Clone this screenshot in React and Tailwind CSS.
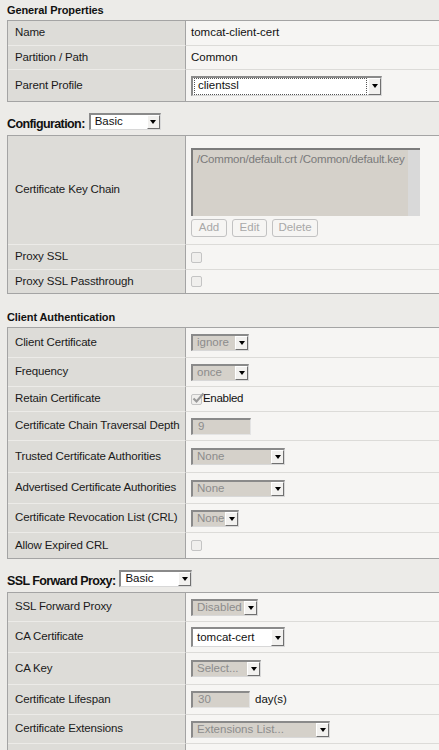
import React from 'react';

const FONT = { fontFamily: '"Liberation Sans", Arial, sans-serif' };

// little old-style select box
const Sel = ({ w, value, disabled, white, h = 17, focus }) => (
  <div
    className={`inline-flex items-stretch border-t-2 border-l-2 border-t-[#8a8a8a] border-l-[#8a8a8a] border-b border-r border-b-[#d8d8d8] border-r-[#d8d8d8] ${
      disabled ? 'bg-[#d5d1ca] text-[#8c8c8c]' : 'bg-white text-[#111]'
    }`}
    style={{ width: w, height: h }}
  >
    <div className="flex-1 flex items-center min-w-0 px-[1px]">
      <span
        className={`flex items-center h-full w-full pl-[3px] leading-none text-[11.5px] ${
          focus ? 'border border-dotted border-[#555]' : ''
        }`}
      >
        {value}
      </span>
    </div>
    <div className="w-[13px] flex items-center justify-center bg-[#f2f1ef] border-l border-t border-l-white border-t-white border-r border-b border-r-[#707070] border-b-[#707070]">
      <div className="w-0 h-0 border-l-[3px] border-r-[3px] border-t-[4px] border-l-transparent border-r-transparent border-t-black" />
    </div>
  </div>
);

const Input = ({ w, value }) => (
  <div
    className="inline-flex items-center h-[17px] bg-[#d5d1ca] text-[#8c8c8c] border-t-2 border-l-2 border-t-[#8a8a8a] border-l-[#8a8a8a] border-b border-r border-b-[#e4e4e4] border-r-[#e4e4e4] pl-[5px] text-[11.5px] leading-none"
    style={{ width: w }}
  >
    {value}
  </div>
);

const Check = ({ checked }) => (
  <div className="relative w-[11px] h-[11px] rounded-[2px] border border-[#c4c4c4] bg-[#f0efed]">
    {checked && (
      <svg className="absolute -top-[3px] left-0" width="13" height="12" viewBox="0 0 13 12">
        <path d="M1.5 6.5 L4.5 9.5 L11.5 1.5" fill="none" stroke="#9a9a9a" strokeWidth="2.2" />
      </svg>
    )}
  </div>
);

const Btn = ({ children, w }) => (
  <div
    className="h-[18px] flex items-center justify-center rounded-[3px] border border-[#c2c2c2] bg-[#f6f5f3] text-[#a8a8a8] text-[11.5px]"
    style={{ width: w }}
  >
    {children}
  </div>
);

const Row = ({ label, h, first, children }) => (
  <div className="grid grid-cols-[178px_1fr]" style={{ height: h }}>
    <div
      className={`flex items-center pl-[7px] bg-[#dddcd8] border-r border-r-[#a4a4a4] text-[#1a1a1a] text-[11.5px] tracking-[-0.15px] ${
        first ? '' : 'border-t border-t-[#ecebe8]'
      }`}
    >
      {label}
    </div>
    <div
      className={`flex items-center pl-[5px] bg-[#f6f5f3] text-[#111] text-[11.5px] ${
        first ? '' : 'border-t border-t-[#dcdbd8]'
      }`}
    >
      {children}
    </div>
  </div>
);

const Table = ({ children }) => (
  <div className="ml-[7px] w-[470px] border border-[#a4a4a4]">{children}</div>
);

const Heading = ({ children, h }) => (
  <div className="flex items-end pl-[7px] pb-[2px] font-bold text-[11px] text-[#111] tracking-[-0.1px]" style={{ height: h }}>
    {children}
  </div>
);

const ConfigHeading = ({ label, selW }) => (
  <div className="flex items-center h-[33px] pt-[6px] pl-[7px] gap-[4px]">
    <span className="font-bold text-[12.5px] text-[#111] tracking-[-0.6px] pt-[6px]">{label}</span>
    <Sel w={selW} value="Basic" />
  </div>
);

export default function App() {
  return (
    <div className="w-full h-[750px] overflow-hidden bg-[#ecebe8]" style={FONT}>
      <Heading h={20}>General Properties</Heading>
      <Table>
        <Row label="Name" h={24} first>
          tomcat-client-cert
        </Row>
        <Row label="Partition / Path" h={24}>
          Common
        </Row>
        <Row label="Parent Profile" h={32}>
          <Sel w={191} h={20} value="clientssl" focus />
        </Row>
      </Table>

      <ConfigHeading label="Configuration:" selW={72} />
      <Table>
        <Row label="Certificate Key Chain" h={108} first>
          <div className="flex flex-col gap-[3px] pt-[4px]">
            <div className="flex w-[229px] h-[68px] border-t-2 border-l-2 border-t-[#7c7c7c] border-l-[#7c7c7c] bg-[#d5d1ca]">
              <div className="flex-1 pl-[4px] pt-[2px] text-[11.5px] text-[#7a7a7a] tracking-[-0.2px] leading-[14px]">
                /Common/default.crt /Common/default.key
              </div>
              <div className="w-[12px] bg-[#d9d9d9]" />
            </div>
            <div className="flex gap-[5px]">
              <Btn w={36}>Add</Btn>
              <Btn w={35}>Edit</Btn>
              <Btn w={46}>Delete</Btn>
            </div>
          </div>
        </Row>
        <Row label="Proxy SSL" h={25}>
          <Check />
        </Row>
        <Row label="Proxy SSL Passthrough" h={24}>
          <Check />
        </Row>
      </Table>

      <Heading h={33}>Client Authentication</Heading>
      <Table>
        <Row label="Client Certificate" h={29} first>
          <Sel w={58} value="ignore" disabled />
        </Row>
        <Row label="Frequency" h={29}>
          <Sel w={58} value="once" disabled />
        </Row>
        <Row label="Retain Certificate" h={25}>
          <div className="flex items-center">
            <Check checked />
            <span className="ml-[1px] text-[11.5px] tracking-[-0.3px]">Enabled</span>
          </div>
        </Row>
        <Row label="Certificate Chain Traversal Depth" h={29}>
          <Input w={60} value="9" />
        </Row>
        <Row label="Trusted Certificate Authorities" h={32}>
          <Sel w={94} value="None" disabled />
        </Row>
        <Row label="Advertised Certificate Authorities" h={31}>
          <Sel w={94} value="None" disabled />
        </Row>
        <Row label="Certificate Revocation List (CRL)" h={29}>
          <Sel w={48} value="None" disabled />
        </Row>
        <Row label="Allow Expired CRL" h={26}>
          <Check />
        </Row>
      </Table>

      <ConfigHeading label="SSL Forward Proxy:" selW={73} />
      <Table>
        <Row label="SSL Forward Proxy" h={28} first>
          <Sel w={67} value="Disabled" disabled />
        </Row>
        <Row label="CA Certificate" h={31}>
          <Sel w={94} h={20} value="tomcat-cert" />
        </Row>
        <Row label="CA Key" h={32}>
          <Sel w={70} value="Select..." disabled />
        </Row>
        <Row label="Certificate Lifespan" h={30}>
          <div className="flex items-center gap-[5px]">
            <Input w={59} value="30" />
            <span className="text-[11.5px]">day(s)</span>
          </div>
        </Row>
        <Row label="Certificate Extensions" h={29}>
          <Sel w={139} value="Extensions List..." disabled />
        </Row>
        <Row label="" h={30}>
          {null}
        </Row>
      </Table>
    </div>
  );
}
